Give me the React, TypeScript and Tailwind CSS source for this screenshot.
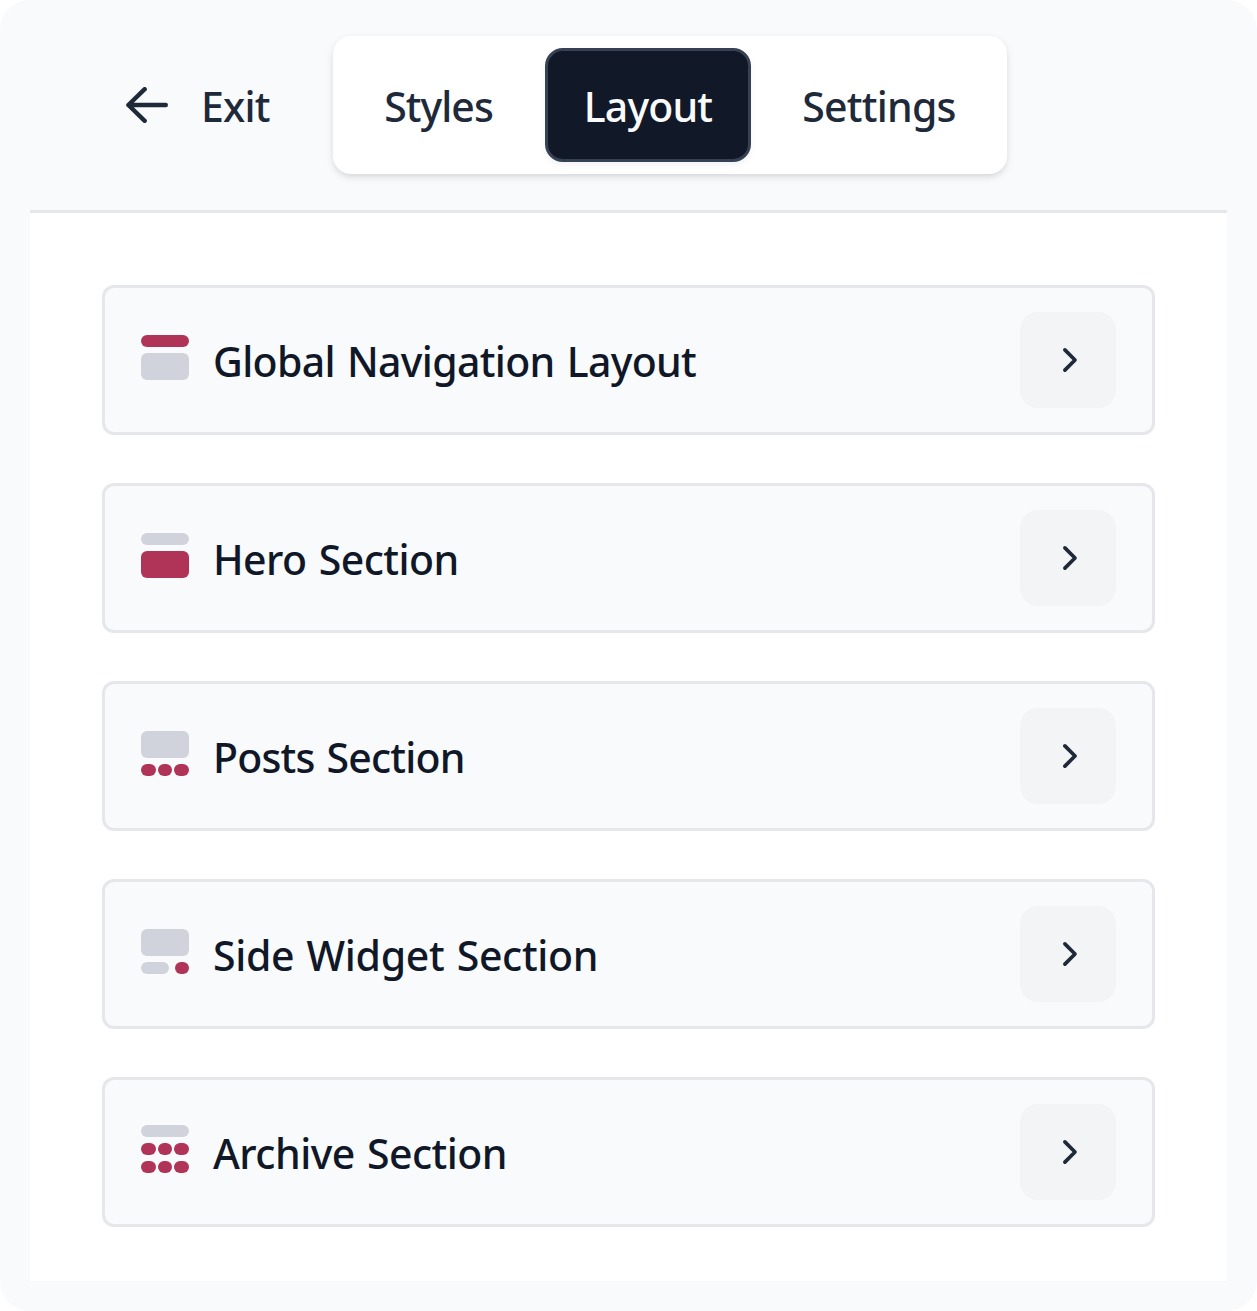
import { useState } from "react";
import type { ReactNode } from "react";

type Tab = "Styles" | "Layout" | "Settings";

interface Section {
  id: string;
  label: string;
  tracking: string;
  icon: ReactNode;
}

const ACCENT = "#b03458";
const MUTED = "#d0d3db";

const tabs: { name: Tab; className: string }[] = [
  { name: "Styles", className: "w-[188px] pr-px tracking-[-0.95px]" },
  { name: "Layout", className: "w-[206px] tracking-[-0.85px]" },
  { name: "Settings", className: "w-[232px] tracking-[-0.77px]" },
];

function Bar({ y, fill }: { y: number; fill: string }) {
  return <rect x="0" y={y} width="48" height="12" rx="6" fill={fill} />;
}

function Block({ y, fill }: { y: number; fill: string }) {
  return <rect x="0" y={y} width="48" height="27" rx="6" fill={fill} />;
}

function Dots({ y }: { y: number }) {
  return (
    <g fill={ACCENT}>
      <rect x="0" y={y} width="15" height="12" rx="6" />
      <rect x="17" y={y} width="14" height="12" rx="6" />
      <rect x="33" y={y} width="15" height="12" rx="6" />
    </g>
  );
}

const sections: Section[] = [
  {
    id: "navigation",
    label: "Global Navigation Layout",
    tracking: "tracking-[-0.66px]",
    icon: (
      <>
        <Bar y={2} fill={ACCENT} />
        <Block y={20} fill={MUTED} />
      </>
    ),
  },
  {
    id: "hero",
    label: "Hero Section",
    tracking: "tracking-[-0.55px]",
    icon: (
      <>
        <Bar y={2} fill={MUTED} />
        <Block y={20} fill={ACCENT} />
      </>
    ),
  },
  {
    id: "posts",
    label: "Posts Section",
    tracking: "tracking-[-0.8px]",
    icon: (
      <>
        <Block y={2} fill={MUTED} />
        <Dots y={35} />
      </>
    ),
  },
  {
    id: "side-widget",
    label: "Side Widget Section",
    tracking: "tracking-[-0.33px]",
    icon: (
      <>
        <Block y={2} fill={MUTED} />
        <rect x="0" y="35" width="28" height="12" rx="6" fill={MUTED} />
        <rect x="34" y="35" width="14" height="12" rx="6" fill={ACCENT} />
      </>
    ),
  },
  {
    id: "archive",
    label: "Archive Section",
    tracking: "tracking-[-0.52px]",
    icon: (
      <>
        <Bar y={0} fill={MUTED} />
        <Dots y={18} />
        <Dots y={36} />
      </>
    ),
  },
];

export default function App() {
  const [tab, setTab] = useState<Tab>("Layout");

  return (
    <div className="bg-white font-['Noto_Sans',sans-serif] text-[41px] leading-[60px] font-medium">
      <div className="flex h-[1311px] w-[1257px] flex-col rounded-[30px] bg-[#f9fafc] px-[30px] pb-[30px]">
        <header className="flex h-[213px] shrink-0 items-start border-b-[3px] border-[#e5e7eb] pt-9 text-[#1e2939]">
          <button className="ml-24 flex h-[138px] w-[207px] items-center gap-[33px]">
            <svg width="42" height="36" viewBox="0 0 42 36" fill="none" className="shrink-0">
              <path
                d="M18.7 2.2 2.4 18l16.3 15.8M2.4 18h37.4"
                stroke="currentColor"
                strokeWidth="4.4"
                strokeLinecap="round"
                strokeLinejoin="round"
              />
            </svg>
            <span className="pt-0.5 tracking-[-0.8px]">Exit</span>
          </button>
          <nav className="flex h-[138px] gap-3 rounded-[18px] bg-white p-3 shadow-[0_3px_9px_rgba(0,0,0,0.1),0_3px_6px_-3px_rgba(0,0,0,0.1)]">
            {tabs.map(({ name, className }) => (
              <button
                key={name}
                onClick={() => setTab(name)}
                className={`${className} flex items-center justify-center rounded-[18px] border-[3px] pt-0.5 whitespace-nowrap ${
                  tab === name
                    ? "border-[#364153] bg-[#111827] text-[#f9fafb] shadow-[0_3px_6px_rgba(0,0,0,0.05)]"
                    : "border-transparent"
                }`}
              >
                {name}
              </button>
            ))}
          </nav>
        </header>

        <main className="flex flex-1 flex-col gap-12 bg-white px-[72px] pt-[72px]">
          {sections.map((section) => (
            <div
              key={section.id}
              className="flex h-[150px] items-center rounded-xl border-[3px] border-[#e5e7eb] bg-[#f9fafc] px-9"
            >
              <svg width="48" height="54" viewBox="0 0 48 54" className="shrink-0">
                {section.icon}
              </svg>
              <span
                className={`ml-6 flex-1 pt-0.5 whitespace-nowrap text-[#101828] [word-spacing:2px] ${section.tracking}`}
              >
                {section.label}
              </span>
              <button
                aria-label={`Open ${section.label}`}
                className="flex size-24 items-center justify-center rounded-[18px] bg-[#f3f4f6] text-[#1e2939]"
              >
                <svg width="36" height="36" viewBox="0 0 36 36" fill="none">
                  <path
                    d="m14.9 7.9 10.1 10.1-10.1 10.1"
                    stroke="currentColor"
                    strokeWidth="3.7"
                    strokeLinecap="round"
                    strokeLinejoin="round"
                  />
                </svg>
              </button>
            </div>
          ))}
        </main>
      </div>
    </div>
  );
}
